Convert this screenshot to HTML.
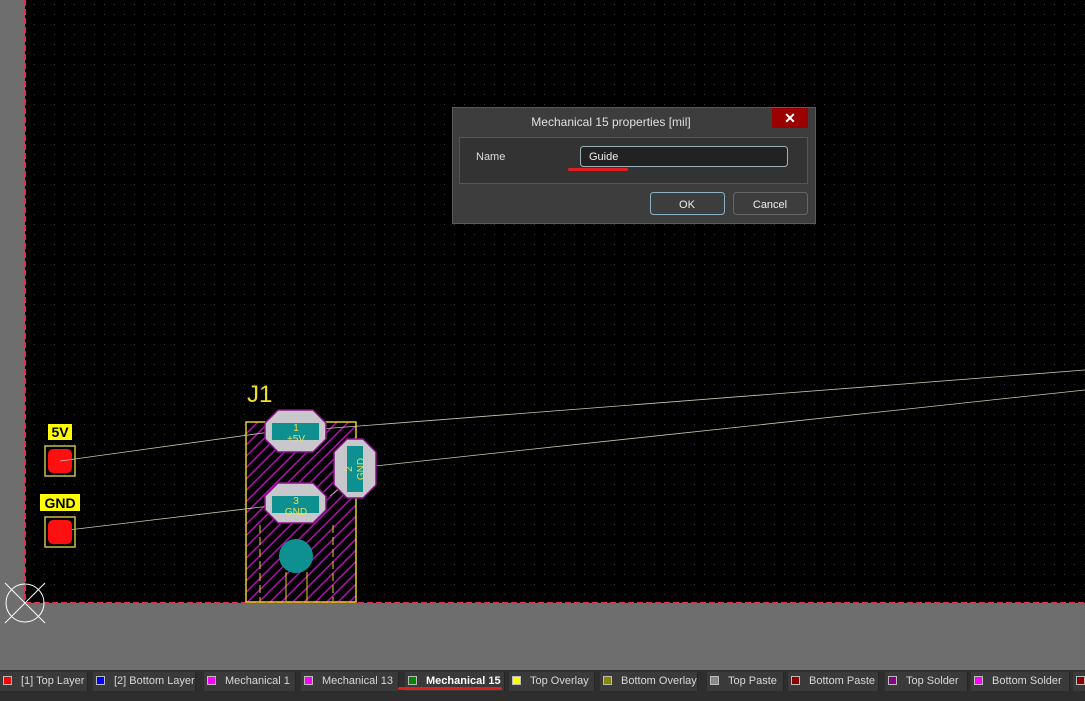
<!DOCTYPE html>
<html><head><meta charset="utf-8"><style>
body{margin:0;width:1085px;height:701px;overflow:hidden;background:#6e6e6e;font-family:"Liberation Sans",sans-serif;position:relative}
.tabs{position:absolute;left:0;top:670px;width:1085px;height:31px;background:#2e2e2e}
.tab{position:absolute;top:2px;height:19px;background:#3a3a3a;color:#d8d8d8;font-size:11px;line-height:19px;border-right:1px solid #262626}
.tab i{position:absolute;left:3px;top:4px;width:9px;height:9px;border:1px solid #bbb;box-sizing:border-box}
.tab span{position:absolute;left:21px;white-space:nowrap}
</style></head><body>
<svg width="1085" height="701" style="position:absolute;left:0;top:0">
<defs>
<pattern id="dots" width="10" height="10" patternUnits="userSpaceOnUse"><rect x="4" y="4" width="1" height="1" fill="#3a3a3a"/></pattern>
<pattern id="hatch" width="8" height="8" patternUnits="userSpaceOnUse" patternTransform="rotate(45)"><rect width="8" height="8" fill="#000"/><rect width="1.5" height="8" fill="#b010b0"/></pattern>
</defs>
<rect x="25" y="0" width="1060" height="603" fill="#000"/>
<rect x="25" y="0" width="1060" height="603" fill="url(#dots)"/>
<line x1="25" y1="0" x2="25" y2="603" stroke="#e03050" stroke-width="2" stroke-dasharray="6,3"/>
<line x1="25" y1="603" x2="1085" y2="603" stroke="#e03050" stroke-width="2" stroke-dasharray="6,3"/>
<circle cx="25" cy="603" r="19" fill="none" stroke="#fff"/>
<line x1="5" y1="583" x2="45" y2="623" stroke="#fff"/><line x1="45" y1="583" x2="5" y2="623" stroke="#fff"/>
<!-- component -->
<rect x="246" y="422" width="110" height="180" fill="url(#hatch)" stroke="#e8d020" stroke-width="1.5"/>
<line x1="260" y1="525" x2="260" y2="601" stroke="#e8d020" stroke-dasharray="8,4"/>
<line x1="333" y1="525" x2="333" y2="601" stroke="#e8d020" stroke-dasharray="8,4"/>
<line x1="286" y1="572" x2="286" y2="601" stroke="#e8d020"/>
<line x1="307" y1="572" x2="307" y2="601" stroke="#e8d020"/>
<circle cx="296" cy="556" r="17" fill="#0e9090"/>
<!-- ratsnest -->
<g stroke="#c8c8b0" stroke-width="0.8">
<line x1="60" y1="461" x2="270" y2="432"/>
<line x1="320" y1="429" x2="1085" y2="370"/>
<line x1="60" y1="531" x2="270" y2="506"/>
<line x1="375" y1="466" x2="1085" y2="390"/>
<line x1="330" y1="496" x2="345" y2="484"/>
</g>
<g stroke="#8a108a" stroke-width="1.5" fill="#c8c8cc">
<polygon points="278,410 313,410 326,423 326,439 313,452 278,452 265,439 265,423"/>
<polygon points="278,483 313,483 326,496 326,510 313,523 278,523 265,510 265,496"/>
<polygon points="347,439 363,439 376,452 376,485 363,498 347,498 334,485 334,452"/>
</g>
<rect x="272" y="423" width="47" height="17" fill="#0e9090"/>
<rect x="272" y="496" width="47" height="17" fill="#0e9090"/>
<rect x="347" y="446" width="16" height="46" fill="#0e9090"/>
<g fill="#e8e060" font-size="10" text-anchor="middle">
<text x="296" y="431">1</text><text x="296" y="442">+5V</text>
<text x="296" y="504">3</text><text x="296" y="515">GND</text>
<text transform="translate(352,469) rotate(-90)">2</text>
<text transform="translate(364,469) rotate(-90)">GND</text>
</g>
<text x="247" y="402" fill="#f0e020" font-size="24">J1</text>
<!-- pads -->
<rect x="48" y="424" width="24" height="16" fill="#ffff00"/><text x="60" y="437" font-size="14" font-weight="bold" text-anchor="middle">5V</text>
<rect x="40" y="494" width="40" height="17" fill="#ffff00"/><text x="60" y="508" font-size="14" font-weight="bold" text-anchor="middle">GND</text>
<rect x="45" y="446" width="30" height="30" fill="none" stroke="#c8c040" stroke-width="1.5"/>
<rect x="48" y="449" width="24" height="24" rx="5" fill="#ff1010"/>
<rect x="45" y="517" width="30" height="30" fill="none" stroke="#c8c040" stroke-width="1.5"/>
<rect x="48" y="520" width="24" height="24" rx="5" fill="#ff1010"/>
<line x1="60" y1="461" x2="75" y2="459" stroke="#c8c8b0" stroke-width="0.8"/>
<!-- dialog -->
<rect x="452.5" y="107.5" width="363" height="116" fill="#3d3d3d" stroke="#5a5a5a"/>
<text x="611" y="126" fill="#e0e0e0" font-size="12" text-anchor="middle">Mechanical 15 properties [mil]</text>
<rect x="772" y="108" width="36" height="20" fill="#9a0000"/>
<text x="790" y="123" fill="#fff" font-size="14" font-weight="bold" text-anchor="middle">✕</text>
<rect x="459.5" y="137.5" width="348" height="46" fill="#333" stroke="#555"/>
<text x="476" y="160" fill="#ddd" font-size="11">Name</text>
<rect x="580.5" y="146.5" width="207" height="20" rx="3" fill="#222" stroke="#9ab0b8"/>
<text x="589" y="160" fill="#eee" font-size="11">Guide</text>
<rect x="568" y="168" width="60" height="3" rx="1.5" fill="#e02020"/>
<rect x="650.5" y="192.5" width="74" height="22" rx="3" fill="#3d3d3d" stroke="#8ab0c8"/>
<text x="687" y="208" fill="#eee" font-size="11" text-anchor="middle">OK</text>
<rect x="733.5" y="192.5" width="74" height="22" rx="3" fill="#3d3d3d" stroke="#666"/>
<text x="770" y="208" fill="#eee" font-size="11" text-anchor="middle">Cancel</text>
</svg>
<div class="tabs">
<div class="tab" style="left:0;width:87px"><i style="background:#f00"></i><span>[1] Top Layer</span></div>
<div class="tab" style="left:93px;width:102px"><i style="background:#00f"></i><span>[2] Bottom Layer</span></div>
<div class="tab" style="left:204px;width:91px"><i style="background:#f0f"></i><span>Mechanical 1</span></div>
<div class="tab" style="left:301px;width:97px"><i style="background:#f0f"></i><span>Mechanical 13</span></div>
<div class="tab" style="left:405px;width:99px"><i style="background:#080"></i><span style="font-weight:bold;color:#fff">Mechanical 15</span></div>
<div class="tab" style="left:509px;width:85px"><i style="background:#ff0"></i><span>Top Overlay</span></div>
<div class="tab" style="left:600px;width:97px"><i style="background:#880"></i><span>Bottom Overlay</span></div>
<div class="tab" style="left:707px;width:76px"><i style="background:#888"></i><span>Top Paste</span></div>
<div class="tab" style="left:788px;width:90px"><i style="background:#800"></i><span>Bottom Paste</span></div>
<div class="tab" style="left:885px;width:82px"><i style="background:#808"></i><span>Top Solder</span></div>
<div class="tab" style="left:971px;width:98px"><i style="background:#f0f"></i><span>Bottom Solder</span></div>
<div class="tab" style="left:1073px;width:20px"><i style="background:#800"></i></div>
<div style="position:absolute;left:398px;top:17px;width:104px;height:3px;border-radius:2px;background:#e02020"></div>
</div>
</body></html>
